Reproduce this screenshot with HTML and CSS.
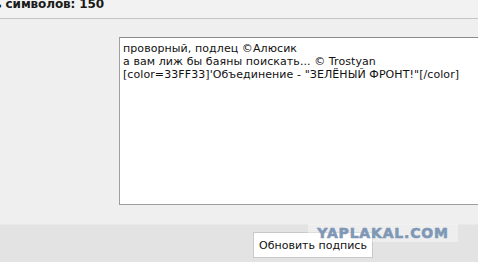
FILE: index.html
```html
<!DOCTYPE html>
<html>
<head>
<meta charset="utf-8">
<link rel="stylesheet" href="styles.css">
</head>
<body>
<div class="page">
  <div class="header"><span class="count">ь символов: 150</span></div>
  <div class="main">
    <textarea class="sig">проворный, подлец ©Алюсик
а вам лиж бы баяны поискать... © Trostyan
[color=33FF33]'Объединение - "ЗЕЛЁНЫЙ ФРОНТ!"[/color]</textarea>
  </div>
  <div class="footer">
    <button class="btn">Обновить подпись</button>
  </div>
  <div class="watermark">YAPLAKAL.COM</div>
</div>
</body>
</html>
```
FILE: styles.css
```css
html, body {
  margin: 0;
  padding: 0;
  overflow: hidden;
}
body {
  width: 478px;
  height: 262px;
  background: #efefef;
  font-family: "DejaVu Sans", Verdana, sans-serif;
}
.page {
  position: relative;
  width: 478px;
  height: 262px;
  overflow: hidden;
}
.header {
  height: 18px;
  background: #f2f2f2;
  border-bottom: 1px solid #c4c4c4;
  overflow: hidden;
}
.count {
  display: block;
  margin-left: -6px;
  margin-top: -3px;
  font-size: 12px;
  font-weight: bold;
  line-height: 14px;
  letter-spacing: -0.1px;
  color: #1a1a1a;
  white-space: nowrap;
}
.main {
  height: 205px;
  background: #efefef;
  padding-top: 18px;
  padding-left: 119px;
  box-sizing: border-box;
  display: flex;
  align-items: flex-start;
}
.sig {
  flex: none;
  width: 420px;
  height: 168px;
  box-sizing: border-box;
  margin: 0;
  padding: 4px 3px;
  border: 1px solid #9e9e9e;
  border-top-color: #8a8a8a;
  background: #fff;
  color: #111;
  font-family: "DejaVu Sans", Verdana, sans-serif;
  font-size: 11px;
  line-height: 13px;
  letter-spacing: 0.08px;
  resize: none;
  overflow: hidden;
  white-space: pre;
}
.footer {
  height: 38px;
  background: #e3e3e3;
  border-top: 1px solid #e9e9e9;
  box-sizing: border-box;
  padding-top: 7px;
  padding-left: 253px;
}
.btn {
  display: block;
  width: 120px;
  height: 26px;
  margin: 0;
  padding: 0;
  background: #fff;
  border: 1px solid #c9c9c9;
  border-radius: 0;
  color: #111;
  font-family: "DejaVu Sans", Verdana, sans-serif;
  font-size: 11px;
}
.watermark {
  position: absolute;
  left: 308px;
  top: 224px;
  width: 150px;
  height: 18px;
  background: rgba(255, 255, 255, 0.4);
  color: #7f98b6;
  font-family: "DejaVu Sans", sans-serif;
  font-weight: bold;
  font-size: 14px;
  line-height: 18px;
  text-align: center;
  letter-spacing: 0.8px;
  -webkit-text-stroke: 0.6px #7f98b6;
}
```
